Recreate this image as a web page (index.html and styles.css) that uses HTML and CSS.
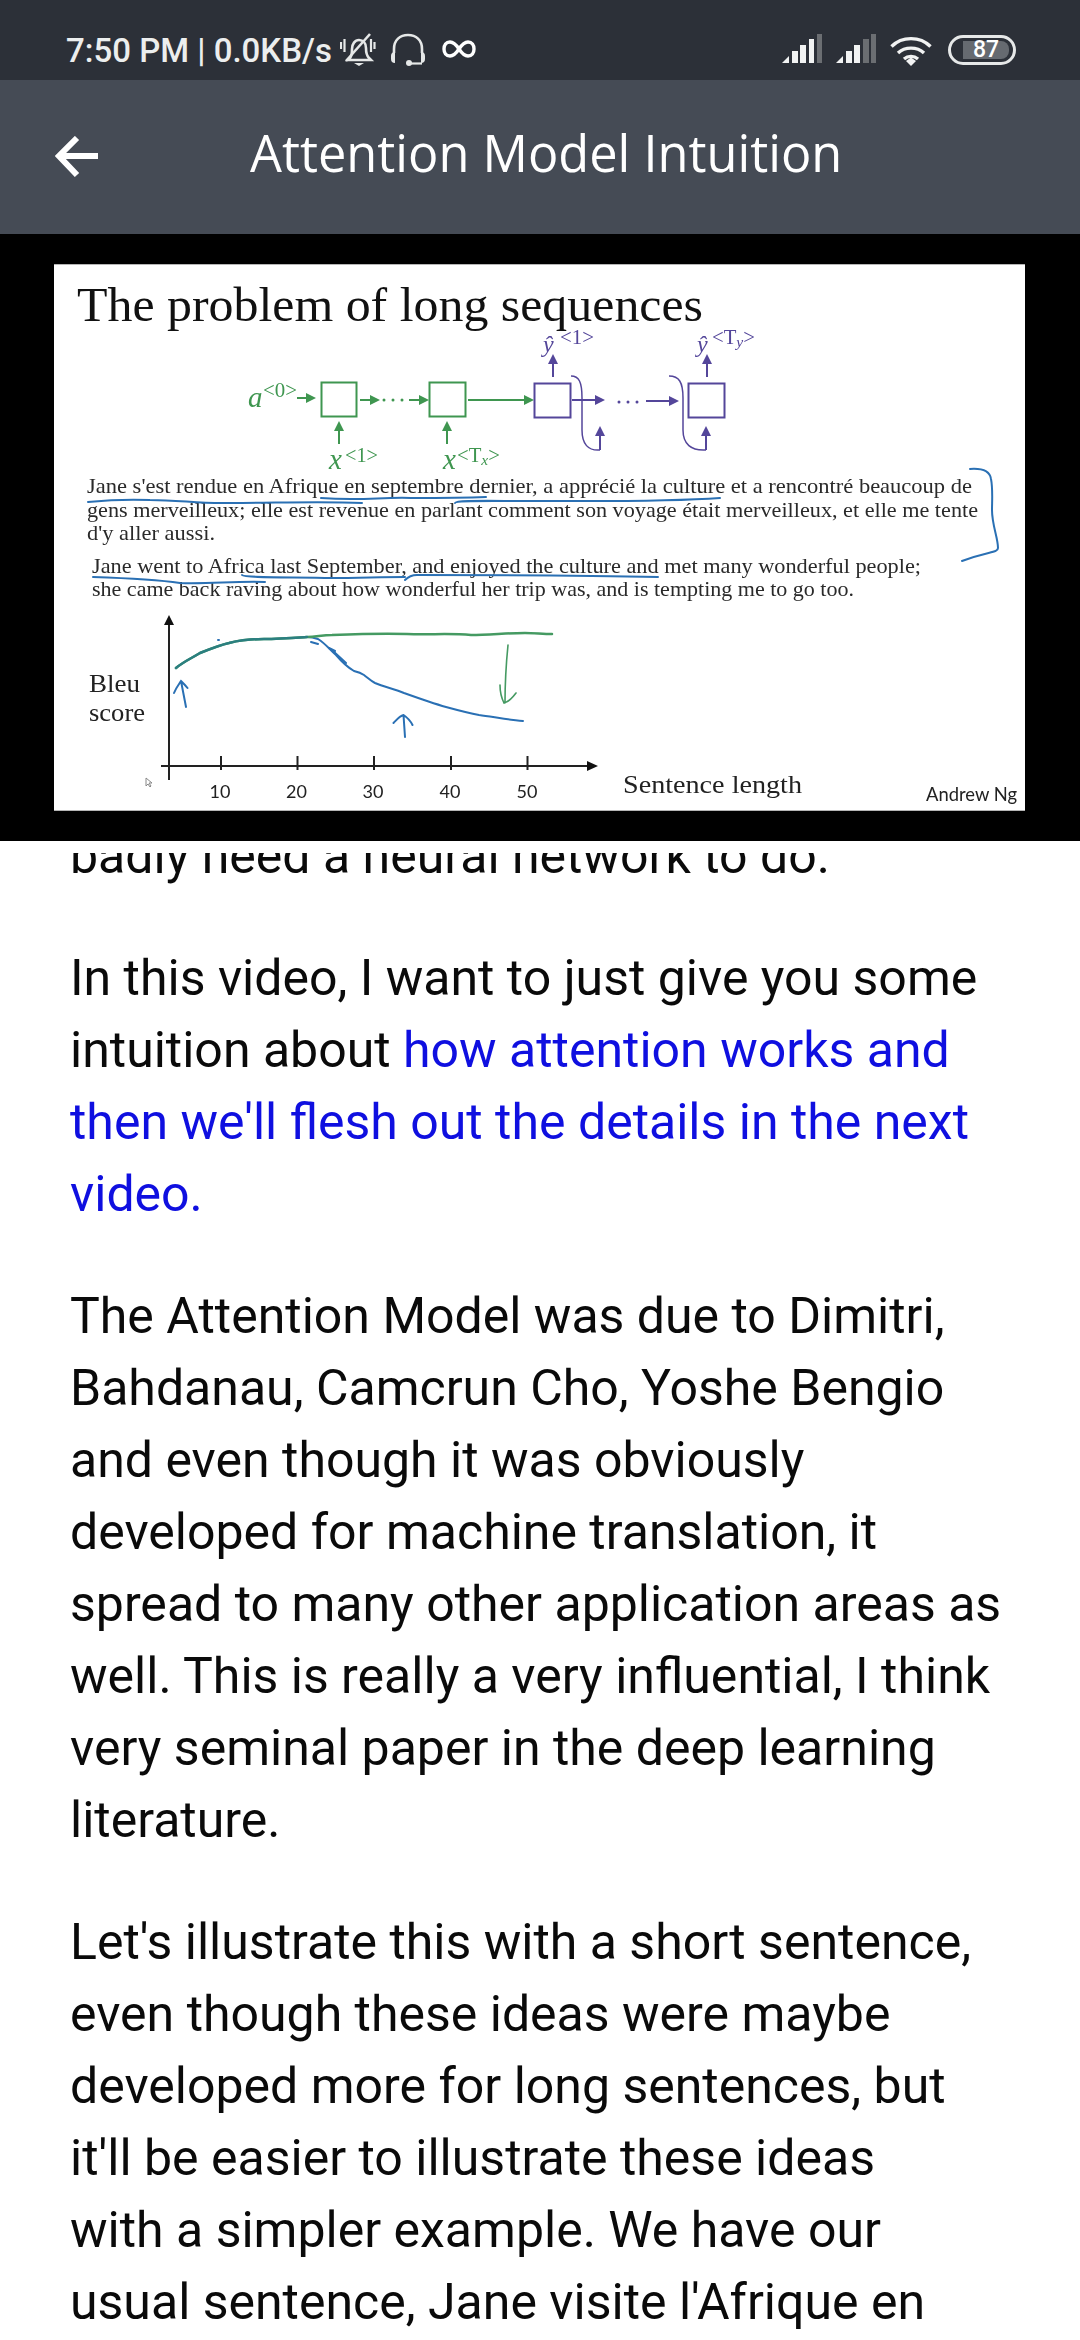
FILE: index.html
```html
<!DOCTYPE html>
<html lang="en">

<head>
    <meta charset="UTF-8">
    <meta name="viewport" content="width=device-width, initial-scale=1.0">
    <title>Attention Model Intuition</title>
    <link rel="stylesheet" href="styles.css">
</head>

<body>
    <div class="screen">
        <div class="statusbar">
            <div class="status-left">
                <span class="status-text">7:50 PM | 0.0KB/s</span>
                <svg class="ic-bell" width="36" height="34" viewBox="0 0 36 34">
                    <path d="M10 25c2-2 2-5 2-9 0-5 3-9 7-9s7 3 7 8c0 4 1 8 3 10l2 2H8z" fill="none" stroke="#e6e8e8" stroke-width="2.6" />
                    <path d="M14 30h10l-5 3z" fill="#e6e8e8" />
                    <path d="M6 28 30 1" stroke="#e6e8e8" stroke-width="2.6" />
                    <path d="M1 9v7M4.500 6v13M31 6v13M34.500 9v7" stroke="#e6e8e8" stroke-width="2.2" />
                </svg>
                <svg class="ic-headset" width="36" height="34" viewBox="0 0 36 34">
                    <path d="M4 20V16C4 7 10 2 18 2s14 5 14 14v4" fill="none" stroke="#e6e8e8" stroke-width="2.6" />
                    <path d="M1 23q0-4 4-4v11q-4 0-4-4zM35 23q0-4-4-4v11q4 0 4-4z" fill="#e6e8e8" />
                    <circle cx="19" cy="30" r="3" fill="#e6e8e8" />
                    <path d="M19 30.500h13" stroke="#e6e8e8" stroke-width="2.200" />
                </svg>
                <svg class="ic-inf" width="34" height="18" viewBox="0 0 34 18">
                    <path d="M17 9C13 3 10 2 8 2 4 2 2 5 2 9s2 7 6 7c2 0 5-1 9-7s7-7 9-7c4 0 6 3 6 7s-2 7-6 7c-2 0-5-1-9-7z" fill="none" stroke="#fff" stroke-width="3.400" />
                </svg>
            </div>
            <div class="status-right">
                <svg class="ic-signal" width="40" height="30" viewBox="0 0 40 30">
                    <path d="M0 29 7 22v7z" fill="#f2f3f3" />
                    <rect x="10" y="17" width="6" height="12" fill="#f2f3f3" />
                    <rect x="18" y="11" width="6" height="18" fill="#f2f3f3" />
                    <rect x="27" y="5" width="5" height="24" fill="#f2f3f3" />
                    <rect x="35" y="0" width="5" height="29" fill="#6b6e72" />
                </svg>
                <svg class="ic-signal" width="40" height="30" viewBox="0 0 40 30">
                    <path d="M0 29 7 22v7z" fill="#f2f3f3" />
                    <rect x="10" y="17" width="6" height="12" fill="#f2f3f3" />
                    <rect x="18" y="11" width="6" height="18" fill="#f2f3f3" />
                    <rect x="27" y="5" width="6" height="24" fill="#6b6e72" />
                    <rect x="35" y="0" width="5" height="29" fill="#6b6e72" />
                </svg>
                <svg class="ic-wifi" width="42" height="31" viewBox="0 0 42 31">
                    <path d="M1.500 11.500C12 1 30 1 40.500 11.500" fill="none" stroke="#f2f3f3" stroke-width="3.400" />
                    <path d="M8 18C15 11.500 27 11.500 34 18" fill="none" stroke="#f2f3f3" stroke-width="3.400" />
                    <path d="M14 24C18 20.500 24 20.500 28 24" fill="none" stroke="#f2f3f3" stroke-width="3.400" />
                    <path d="M16 26 21 22.500 26 26 21 31z" fill="#f2f3f3" />
                </svg>
                <div class="battery"><span class="battery-level">87</span></div>
            </div>
        </div>

        <div class="toolbar">
            <svg class="back" width="44" height="42" viewBox="0 0 44 42">
                <path d="M43 20H5M22 2 4 20l18 19" fill="none" stroke="#fff" stroke-width="6" />
            </svg>
            <h1 class="title">Attention Model Intuition</h1>
        </div>

        <div class="video">
            <svg class="slide" width="971" height="547" viewBox="54 264 971 547">
                <defs>
                    <marker id="headGreen" markerWidth="5" markerHeight="5" refX="4" refY="2.500" orient="auto" markerUnits="strokeWidth">
                        <path d="M0 0 5 2.500 0 5z" fill="#3f9650" />
                    </marker>
                    <marker id="headPurple" markerWidth="5" markerHeight="5" refX="4" refY="2.500" orient="auto" markerUnits="strokeWidth">
                        <path d="M0 0 5 2.500 0 5z" fill="#54469a" />
                    </marker>
                </defs>

                <path class="frame" d="M54 264.500h971M54 810.500h971" />

                <text class="slide-title" x="77" y="321" textLength="626" lengthAdjust="spacingAndGlyphs">The problem of long sequences</text>

                <!-- encoder -->
                <g class="green-line">
                    <rect x="321.500" y="382.500" width="35" height="34" />
                    <rect x="429.500" y="382.500" width="36" height="34" />
                    <path class="arr" d="M297 398h17" />
                    <path class="arr" d="M360 400h18" />
                    <path class="arr" d="M409 400h18" />
                    <path class="arr" d="M468 400h64" />
                    <path class="arr" d="M339 444v-21" />
                    <path class="arr" d="M447 444v-21" />
                </g>
                <g class="green-dots">
                    <circle cx="384" cy="400" r="1.500" />
                    <circle cx="393" cy="400" r="1.500" />
                    <circle cx="402" cy="400" r="1.500" />
                </g>
                <text class="math green" x="248" y="407">a</text>
                <text class="sup green" x="263" y="397" textLength="34" lengthAdjust="spacingAndGlyphs">&lt;0&gt;</text>
                <text class="math green" x="329" y="469">x</text>
                <text class="sup green" x="345" y="462" textLength="33" lengthAdjust="spacingAndGlyphs">&lt;1&gt;</text>
                <text class="math green" x="443" y="469">x</text>
                <text class="sup green" x="457" y="462" textLength="43" lengthAdjust="spacingAndGlyphs">&lt;T<tspan class="sub" dy="3">x</tspan><tspan dy="-3">&gt;</tspan></text>

                <!-- decoder -->
                <g class="purple-line">
                    <rect x="534.500" y="383.500" width="36" height="34" />
                    <rect x="688.500" y="383.500" width="36" height="34" />
                    <path class="arr" d="M572 400h31" />
                    <path class="arr" d="M646 401h31" />
                    <path class="arr" d="M553 377v-21" />
                    <path class="arr" d="M707 377v-21" />
                    <path class="thin" d="M571 376c8 0 11 6 11 22v32c0 14 6 21 18 20" />
                    <path class="thin" d="M669 376c10 0 14 6 14 22v32c0 14 8 21 23 20" />
                    <path class="arr" d="M600 450v-22" />
                    <path class="arr" d="M706 450v-22" />
                </g>
                <g class="purple-dots">
                    <circle cx="619" cy="402" r="1.500" />
                    <circle cx="628" cy="402" r="1.500" />
                    <circle cx="637" cy="402" r="1.500" />
                </g>
                <text class="hat purple" x="543" y="352">ŷ</text>
                <text class="sup purple" x="560" y="344" textLength="34" lengthAdjust="spacingAndGlyphs">&lt;1&gt;</text>
                <text class="hat purple" x="697" y="352">ŷ</text>
                <text class="sup purple" x="712" y="344" textLength="43" lengthAdjust="spacingAndGlyphs">&lt;T<tspan class="sub" dy="3">y</tspan><tspan dy="-3">&gt;</tspan></text>

                <!-- sentences -->
                <text class="para" x="87" y="493" textLength="885" lengthAdjust="spacingAndGlyphs">Jane s'est rendue en Afrique en septembre dernier, a apprécié la culture et a rencontré beaucoup de</text>
                <text class="para" x="87" y="517" textLength="891" lengthAdjust="spacingAndGlyphs">gens merveilleux; elle est revenue en parlant comment son voyage était merveilleux, et elle me tente</text>
                <text class="para" x="87" y="540" textLength="128" lengthAdjust="spacingAndGlyphs">d'y aller aussi.</text>
                <text class="para" x="92" y="573" textLength="829" lengthAdjust="spacingAndGlyphs">Jane went to Africa last September, and enjoyed the culture and met many wonderful people;</text>
                <text class="para" x="92" y="596" textLength="762" lengthAdjust="spacingAndGlyphs">she came back raving about how wonderful her trip was, and is tempting me to go too.</text>

                <!-- pen marks -->
                <g class="pen">
                    <path d="M88 502c20-2 40-3 62-2 30 0 50 4 80 3 45 0 90-2 132 0" />
                    <path d="M321 498c40 3 60-1 90 0 25 0 50 0 75-1" />
                    <path d="M455 503c1-3 30-2 80-2 60 0 130 1 185-3" />
                    <path d="M970 469c14-1 20 3 21 10 2 10 1 22 1 31 0 15 6 28 6 38 0 5-10 3-36 13" />
                    <path d="M93 577c30 1 60 2 87 6 30 1 55-2 85-1" />
                    <path d="M242 575c2 3 50 2 90 3 25 0 50-1 73-1" />
                    <path d="M405 580c3-3 6-5 12-5 80 0 160 0 241 2" />
                </g>

                <!-- chart -->
                <path class="axis" d="M169 780V622M161 766H590M221 756v14M297.500 756v14M374 756v14M451 756v14M527.500 756v14" />
                <path d="M169 615l-5 10h10zM598 766l-11-5v10z" fill="#111" />
                <text class="axis-num" x="220" y="798">10</text>
                <text class="axis-num" x="296.500" y="798">20</text>
                <text class="axis-num" x="373" y="798">30</text>
                <text class="axis-num" x="450" y="798">40</text>
                <text class="axis-num" x="527" y="798">50</text>
                <text class="chart-label" x="89" y="692" textLength="51" lengthAdjust="spacingAndGlyphs">Bleu</text>
                <text class="chart-label" x="89" y="721" textLength="56" lengthAdjust="spacingAndGlyphs">score</text>
                <text class="chart-label" x="623" y="793" textLength="179" lengthAdjust="spacingAndGlyphs">Sentence length</text>
                <text class="credit" x="926" y="801" textLength="91" lengthAdjust="spacingAndGlyphs">Andrew Ng</text>

                <path class="curve-blue" d="M307 637c5 0 8 1 11 2 8 5 12 11 18 16 6 7 11 12 18 16 4 1 7 2 10 4 4 3 7 6 11 8 9 4 20 6 29 10 14 5 28 10 42 14 11 3 22 6 33 8 15 2 30 5 44 6" />
                <path class="curve-blue" d="M311 642l7 2M329 648l6 3M332 650l14 13M218 640h1" />
                <path class="curve-green" d="M176 668c7-6 16-10 24-15 10-4 20-8 29-10 12-3 24-4 35-4 14 0 28-1 43-2 9 0 15-2 25-2 25-1 50-2 75-1 22 1 42-1 64 1 18 0 36-2 54-2 9 0 18 1 27 1" />
                <path class="curve-teal" d="M176 668c7-6 16-10 24-15 10-4 20-8 29-10 12-3 24-4 35-4 14 0 28-1 43-2" />
                <path class="curve-blue" d="M186 707 181 681M174 693c2-5 5-9 7-12 2 2 5 5 6.500 7M405 737 403.500 715M393.500 723c3-3 6-7 10-8 3 2 7 6 9 10" />
                <path class="curve-green thin-mark" d="M508 645C506 665 505 685 505 703M500 685c0 6 2 14 4 18 5-1 9-6 12-10" />
                <path class="cursor" d="M146 778v8l2-2 2 3 1-1-2-3h3z" />
            </svg>
        </div>

        <div class="article">
            <div class="article-clip">
                <div class="article-body">
                    <p>badly need a neural network to do.</p>
                    <p>In this video, I want to just give you some intuition about <span class="highlight">how attention works and then we'll flesh out the details in the next video.</span></p>
                    <p>The Attention Model was due to Dimitri, Bahdanau, Camcrun Cho, Yoshe Bengio and even though it was obviously developed for machine translation, it spread to many other application areas as well. This is really a very influential, I think very seminal paper in the deep learning literature.</p>
                    <p>Let's illustrate this with a short sentence, even though these ideas were maybe developed more for long sentences, but it'll be easier to illustrate these ideas<br>with a simpler example. We have our usual sentence, Jane visite l'Afrique en septembre.</p>
                </div>
            </div>
        </div>
    </div>
</body>

</html>
```

FILE: styles.css
```css
* {
    margin: 0;
    padding: 0;
    box-sizing: border-box;
}

body {
    font-family: Roboto, sans-serif;
    background: white;
}

.screen {
    display: flex;
    flex-direction: column;
    width: 1080px;
    height: 2340px;
    overflow: hidden;
}

.statusbar {
    display: flex;
    justify-content: space-between;
    align-items: center;
    height: 80px;
    padding: 20px 64px 0 66px;
    background: #2c3038;
    color: #eceeee;
}

.status-left {
    display: flex;
    align-items: center;
}

.status-text {
    font-size: 33px;
    font-weight: 500;
}

.ic-bell {
    margin-left: 8px;
}

.ic-headset {
    margin-left: 14px;
}

.ic-inf {
    margin-left: 16px;
    margin-bottom: 2px;
}

.status-right {
    display: flex;
    align-items: center;
    gap: 14px;
}

.ic-signal {
    margin-bottom: 2px;
}

.battery {
    display: flex;
    align-items: center;
    width: 68px;
    height: 30px;
    margin-left: 2px;
    padding: 3px 4px 3px 12px;
    border: 3px solid #e6e8e8;
    border-radius: 15px;
}

.battery-level {
    display: block;
    width: 100%;
    height: 18px;
    background: #666a70;
    border-radius: 0 8px 8px 0;
    color: white;
    font-size: 23px;
    font-weight: 500;
    line-height: 18px;
    text-align: center;
}

.toolbar {
    display: flex;
    align-items: center;
    height: 154px;
    padding-left: 55px;
    background: #454b55;
}

.back {
    flex: none;
}

.title {
    margin-left: 151px;
    margin-bottom: 10px;
    color: white;
    font-family: "Open Sans", sans-serif;
    font-size: 50.500px;
    font-weight: 400;
    white-space: nowrap;
}

.video {
    height: 607px;
    padding: 30px 55px 0 54px;
    background: black;
}

.slide {
    display: block;
    background: white;
    filter: blur(0.4px);
}

.frame {
    stroke: #b5b5b5;
    stroke-width: 1;
}

.slide text {
    font-family: "Liberation Serif", serif;
    fill: #1c1c1c;
}

.slide .slide-title {
    font-size: 48px;
    fill: #111;
}

.slide .para {
    font-size: 21px;
    fill: #2a2a2a;
}

.slide .math {
    font-size: 29px;
    font-style: italic;
}

.slide .hat {
    font-size: 24px;
    font-style: italic;
}

.slide .sup {
    font-size: 20px;
}

.slide .sub {
    font-size: 15px;
    font-style: italic;
}

.slide .green {
    fill: #3f9650;
}

.slide .purple {
    fill: #54469a;
}

.green-line,
.purple-line {
    fill: none;
    stroke-width: 2;
}

.green-line {
    stroke: #3f9650;
}

.purple-line {
    stroke: #54469a;
}

.green-line .arr {
    marker-end: url(#headGreen);
}

.purple-line .arr {
    marker-end: url(#headPurple);
}

.purple-line .thin {
    stroke-width: 1.5;
}

.green-dots {
    fill: #3f9650;
}

.purple-dots {
    fill: #54469a;
}

.pen {
    fill: none;
    stroke: #2a70b4;
    stroke-width: 2;
    stroke-linecap: round;
}

.axis {
    fill: none;
    stroke: #222;
    stroke-width: 2;
}

.slide .axis-num {
    font-family: Lato, sans-serif;
    font-size: 18px;
    text-anchor: middle;
    fill: #222;
}

.slide .chart-label {
    font-size: 26px;
    fill: #222;
}

.slide .credit {
    font-family: Lato, sans-serif;
    font-size: 19px;
    fill: #222;
}

.curve-blue {
    fill: none;
    stroke: #2a70b4;
    stroke-width: 2;
    stroke-linecap: round;
}

.curve-green {
    fill: none;
    stroke: #459a62;
    stroke-width: 2.500;
    stroke-linecap: round;
}

.thin-mark {
    stroke-width: 1.600;
}

.curve-teal {
    fill: none;
    stroke: #2b7f80;
    stroke-width: 2.500;
    stroke-linecap: round;
}

.cursor {
    fill: white;
    stroke: #888;
    stroke-width: 1;
}

.article {
    display: flex;
    flex: 1;
    min-height: 0;
    padding-top: 12px;
}

.article-clip {
    flex: 1;
    overflow: hidden;
}

.article-body {
    margin-top: -33px;
    padding: 0 70px;
    font-size: 50px;
    line-height: 72px;
    color: #0a0a0a;
}

.article-body p {
    margin-bottom: 50px;
}

.highlight {
    color: #0f0fe0;
}
```
